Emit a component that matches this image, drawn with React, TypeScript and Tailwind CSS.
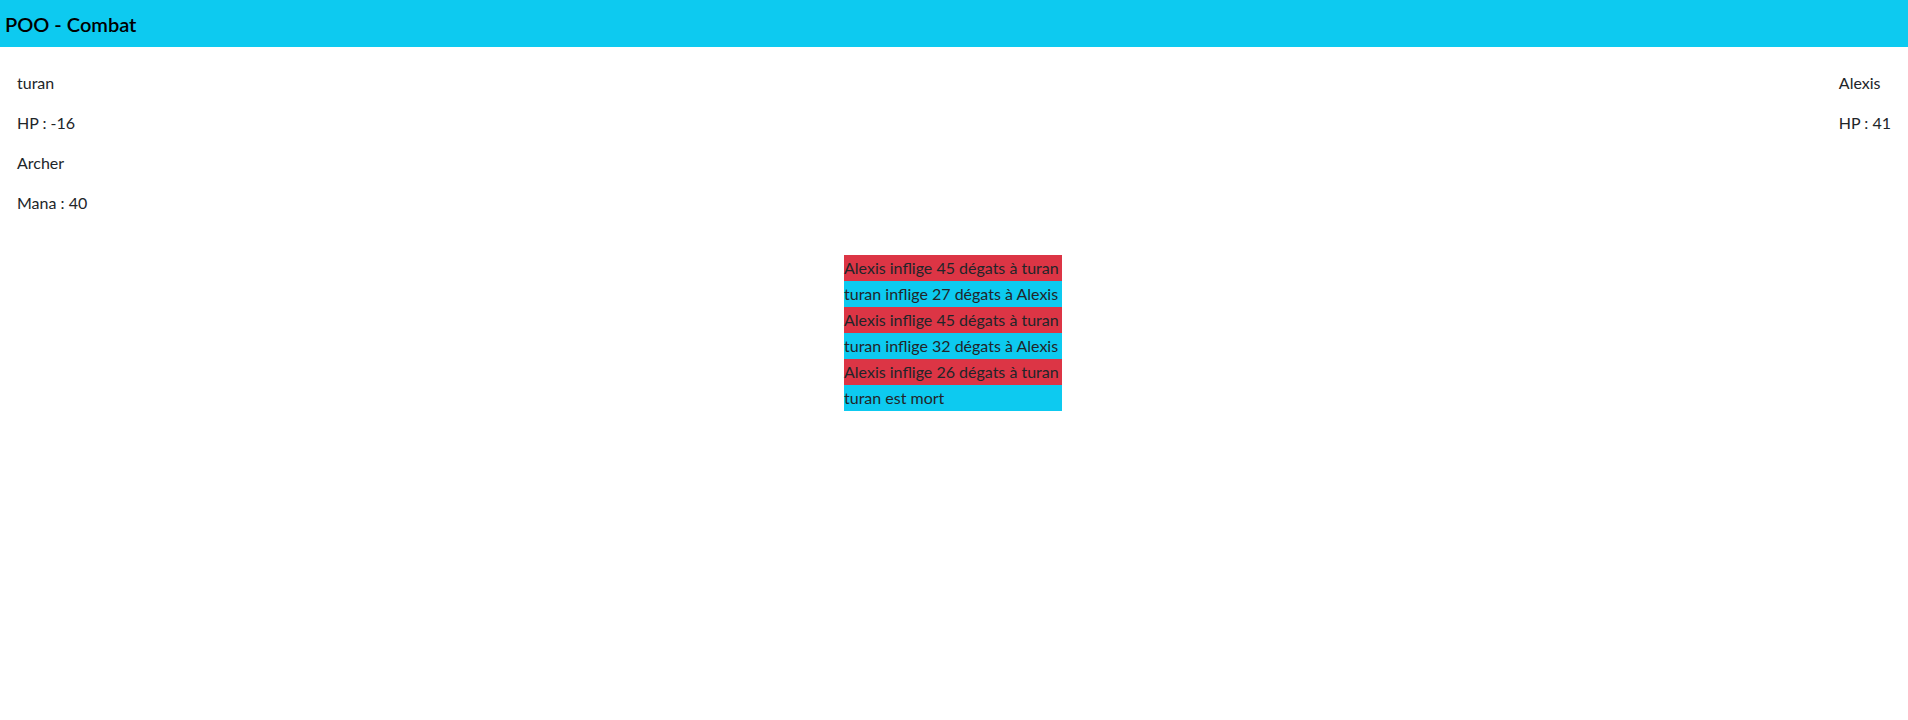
const log = [
  { text: "Alexis inflige 45 dégats à turan", enemy: true },
  { text: "turan inflige 27 dégats à Alexis", enemy: false },
  { text: "Alexis inflige 45 dégats à turan", enemy: true },
  { text: "turan inflige 32 dégats à Alexis", enemy: false },
  { text: "Alexis inflige 26 dégats à turan", enemy: true },
  { text: "turan est mort", enemy: false },
];

export default function App() {
  return (
    <div className="min-h-screen bg-white text-[16px] text-[#212529] font-['Lato','Noto_Sans',sans-serif]">
      {/* Header */}
      <header className="flex h-[47px] items-center bg-[#0dcaf0] px-[5px]">
        <h1 className="text-[20px] font-semibold text-black">POO - Combat</h1>
      </header>

      {/* Fighters */}
      <div className="flex justify-between px-[17px] pt-[24px]">
        <div>
          <p className="mb-4 leading-6">turan</p>
          <p className="mb-4 leading-6">HP : -16</p>
          <p className="mb-4 leading-6">Archer</p>
          <p className="mb-4 leading-6">Mana : 40</p>
        </div>
        <div>
          <p className="mb-4 leading-6">Alexis</p>
          <p className="mb-4 leading-6">HP : 41</p>
        </div>
      </div>

      {/* Combat log */}
      <div className="mt-[24px] flex justify-center">
        <ul className="ml-[-2px] w-[218px]">
          {log.map((l, i) => (
            <li
              key={i}
              className={`h-[26px] whitespace-nowrap leading-[26px] ${l.enemy ? "bg-[#dc3545]" : "bg-[#0dcaf0]"}`}
            >
              {l.text}
            </li>
          ))}
        </ul>
      </div>
    </div>
  );
}
